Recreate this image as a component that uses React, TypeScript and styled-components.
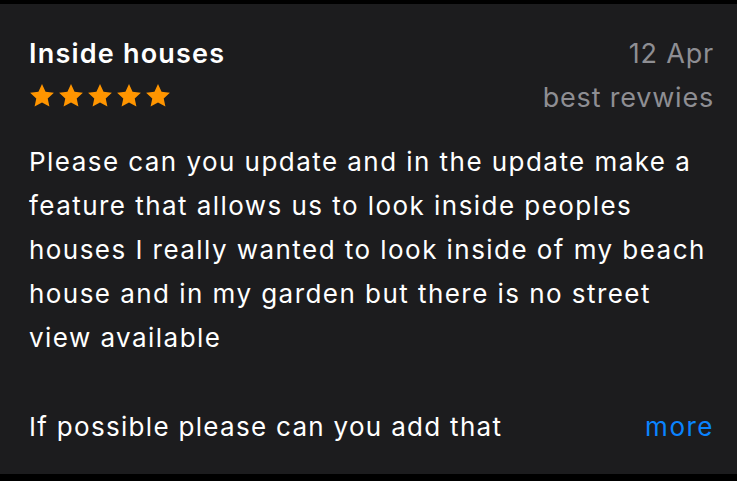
import styled, { createGlobalStyle } from "styled-components";

const GlobalStyle = createGlobalStyle`
  html, body {
    margin: 0;
    padding: 0;
    background: #000;
  }
  body {
    font-family: Inter, "Noto Sans", sans-serif;
  }
`;

const Star = () => (
  <svg width="28" height="28" viewBox="0 0 24 24">
    <path
      d="M12 1.8l3.05 6.55 7.15.8-5.3 4.9 1.45 7.05L12 17.5l-6.35 3.6 1.45-7.05-5.3-4.9 7.15-.8z"
      fill="#ff9500"
    />
  </svg>
);

const bodyLines = [
  "Please can you update and in the update make a",
  "feature that allows us to look inside peoples",
  "houses I really wanted to look inside of my beach",
  "house and in my garden but there is no street",
  "view available",
];

const App = () => {
  return (
    <>
      <GlobalStyle />
      <Screen>
        <Card>
          <Header>
            <LeftCol>
              <Title>Inside houses</Title>
              <Stars>
                {[0, 1, 2, 3, 4].map((i) => (
                  <Star key={i} />
                ))}
              </Stars>
            </LeftCol>
            <RightCol>
              <Meta>12 Apr</Meta>
              <Meta>best revwies</Meta>
            </RightCol>
          </Header>
          <Body>
            {bodyLines.map((line) => (
              <Line key={line}>{line}</Line>
            ))}
          </Body>
          <LastRow>
            <LastLine>If possible please can you add that</LastLine>
            <More>more</More>
          </LastRow>
        </Card>
      </Screen>
    </>
  );
};

export default App;

const Screen = styled.div`
  width: 737px;
  height: 481px;
  padding: 4px 0 7px;
  box-sizing: border-box;
  background: #000;
`;

const Card = styled.div`
  height: 100%;
  background: #1c1c1e;
  padding: 30px 23px 0 29px;
  box-sizing: border-box;
  display: flex;
  flex-direction: column;
`;

const Header = styled.div`
  display: flex;
  justify-content: space-between;
`;

const LeftCol = styled.div`
  display: flex;
  flex-direction: column;
`;

const RightCol = styled.div`
  display: flex;
  flex-direction: column;
  align-items: flex-end;
  margin-top: -2px;
`;

const Title = styled.div`
  color: #fff;
  font-size: 27px;
  font-weight: 600;
  line-height: 40px;
  letter-spacing: 1.2px;
`;

const Stars = styled.div`
  display: flex;
  gap: 1px;
  margin-top: 8px;
  margin-left: -1px;
`;

const Meta = styled.div`
  color: #8e8e93;
  font-size: 27px;
  line-height: 44px;
  letter-spacing: 0.8px;
`;

const Body = styled.div`
  margin-top: 20px;
  color: #fff;
  font-size: 26px;
  line-height: 44px;
  letter-spacing: 1.45px;
`;

const Line = styled.div`
  white-space: nowrap;
`;

const LastRow = styled.div`
  margin-top: 45px;
  display: flex;
  justify-content: space-between;
  align-items: baseline;
`;

const LastLine = styled.div`
  color: #fff;
  font-size: 26px;
  line-height: 44px;
  letter-spacing: 1.3px;
`;

const More = styled.div`
  color: #0a84ff;
  font-size: 26px;
  line-height: 44px;
  letter-spacing: 1.5px;
`;
